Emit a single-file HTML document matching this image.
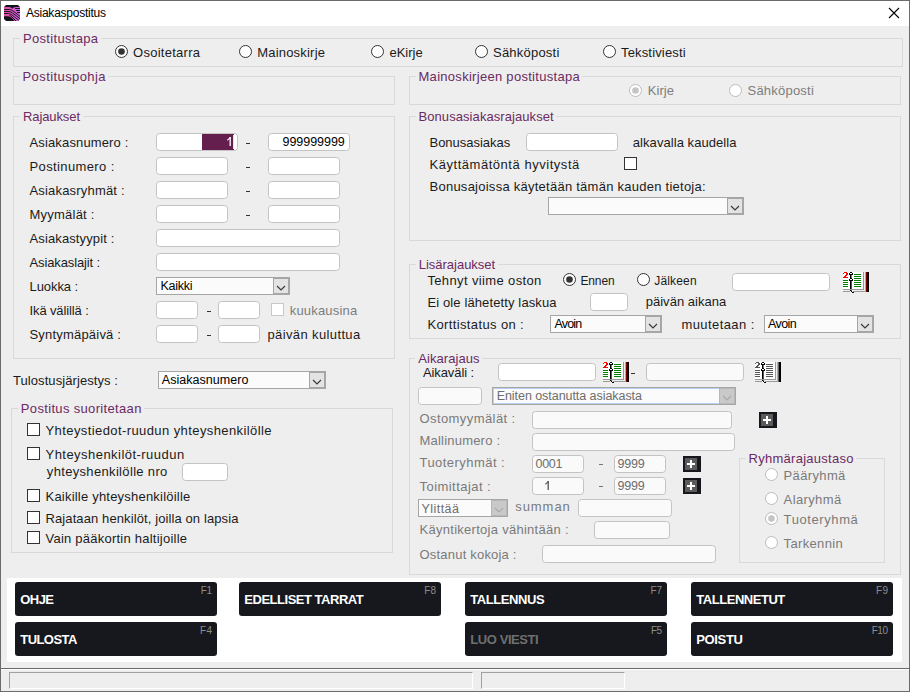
<!DOCTYPE html><html><head><meta charset="utf-8"><style>
html,body{margin:0;padding:0;}
body{width:910px;height:692px;position:relative;overflow:hidden;background:#eeeeee;font-family:"Liberation Sans",sans-serif;}
.a{position:absolute;}
.t{position:absolute;white-space:nowrap;line-height:1;}
svg.a{overflow:visible;}
</style></head><body>
<div class="a" style="left:1px;top:1px;width:908px;height:25px;background:#fff;"></div>
<svg class="a" style="left:4px;top:5px" width="16" height="16" viewBox="0 0 16 16">
<defs><linearGradient id="ig" x1="0" x2="1" y1="0" y2="0"><stop offset="0" stop-color="#e04f9e"/><stop offset="1" stop-color="#cf5ce6"/></linearGradient>
<clipPath id="ic"><path d="M2,0 H14 L16,2 V14 L14,16 H2 L0,14 V2 Z"/></clipPath></defs>
<path d="M2,0 H14 L16,2 V14 L14,16 H2 L0,14 V2 Z" fill="#111318"/>
<g clip-path="url(#ic)">
<path d="M0,2 L5,2 Q7.5,2.3 8,3.8 Q9,2.2 12,2 L16,2 L16,16 L10.5,16 Q7.5,11.3 3.5,11.3 L0,11.3 Z" fill="url(#ig)"/>
<g fill="none" stroke="#111318" stroke-width="0.95">
<path d="M0,4.5 H5.5 Q7.5,4.8 9,6 L16,11.3"/>
<path d="M0,6.5 H5 Q7,6.8 8.5,8 L16,13.6"/>
<path d="M0,8.5 H4.5 Q6.5,8.8 8,10 L15,15.5"/>
<path d="M5.5,10.3 Q7,10.8 8,12 L12,16"/>
<path d="M11,3.5 H16"/><path d="M12,5.5 H16"/><path d="M13,7.5 H16"/>
</g></g></svg>
<div class="t" style="left:26.00px;top:7.00px;font-size:12px;color:#000;letter-spacing:-0.243px;">Asiakaspostitus</div>
<svg class="a" style="left:888px;top:7px" width="12" height="12"><path d="M1,1 L11,11 M11,1 L1,11" stroke="#000" stroke-width="1.1"/></svg>
<div class="a" style="left:13px;top:38px;width:890px;height:29px;box-sizing:border-box;border:1px solid #d9d9d9;"></div>
<div class="a" style="left:20px;top:37px;width:81px;height:3px;background:#eeeeee;"></div>
<div class="t" style="left:23.00px;top:32.00px;font-size:13px;color:#6b2a63;letter-spacing:0.314px;">Postitustapa</div>
<svg class="a" style="left:115px;top:45px" width="14" height="14"><circle cx="6.5" cy="6.5" r="6" fill="#fff" stroke="#333" stroke-width="1"/><circle cx="6.5" cy="6.5" r="3.3" fill="#333"/></svg>
<div class="t" style="left:133.00px;top:46.00px;font-size:13px;color:#1b1b1b;letter-spacing:0.270px;">Osoitetarra</div>
<svg class="a" style="left:239px;top:45px" width="14" height="14"><circle cx="6.5" cy="6.5" r="6" fill="#fff" stroke="#333" stroke-width="1"/></svg>
<div class="t" style="left:257.20px;top:46.00px;font-size:13px;color:#1b1b1b;letter-spacing:0.205px;">Mainoskirje</div>
<svg class="a" style="left:371px;top:45px" width="14" height="14"><circle cx="6.5" cy="6.5" r="6" fill="#fff" stroke="#333" stroke-width="1"/></svg>
<div class="t" style="left:389.40px;top:46.00px;font-size:13px;color:#1b1b1b;letter-spacing:0.010px;">eKirje</div>
<svg class="a" style="left:475px;top:45px" width="14" height="14"><circle cx="6.5" cy="6.5" r="6" fill="#fff" stroke="#333" stroke-width="1"/></svg>
<div class="t" style="left:493.00px;top:46.00px;font-size:13px;color:#1b1b1b;letter-spacing:0.222px;">Sähköposti</div>
<svg class="a" style="left:603px;top:45px" width="14" height="14"><circle cx="6.5" cy="6.5" r="6" fill="#fff" stroke="#333" stroke-width="1"/></svg>
<div class="t" style="left:621.00px;top:46.00px;font-size:13px;color:#1b1b1b;letter-spacing:0.159px;">Tekstiviesti</div>
<div class="a" style="left:13px;top:76px;width:382px;height:29px;box-sizing:border-box;border:1px solid #d9d9d9;"></div>
<div class="a" style="left:20px;top:75px;width:88px;height:3px;background:#eeeeee;"></div>
<div class="t" style="left:22.50px;top:70.00px;font-size:13px;color:#6b2a63;letter-spacing:0.413px;">Postituspohja</div>
<div class="a" style="left:409px;top:76px;width:492px;height:29px;box-sizing:border-box;border:1px solid #d9d9d9;"></div>
<div class="a" style="left:416px;top:75px;width:166px;height:3px;background:#eeeeee;"></div>
<div class="t" style="left:418.50px;top:70.00px;font-size:13px;color:#6b2a63;letter-spacing:0.290px;">Mainoskirjeen postitustapa</div>
<svg class="a" style="left:629px;top:84px" width="14" height="14"><circle cx="6.5" cy="6.5" r="6" fill="#fff" stroke="#bcbcbc" stroke-width="1"/><circle cx="6.5" cy="6.5" r="3.3" fill="#c4c4c4"/></svg>
<div class="t" style="left:647.70px;top:84.00px;font-size:13px;color:#7d7d7d;letter-spacing:0.075px;">Kirje</div>
<svg class="a" style="left:729px;top:84px" width="14" height="14"><circle cx="6.5" cy="6.5" r="6" fill="#fff" stroke="#bcbcbc" stroke-width="1"/></svg>
<div class="t" style="left:747.50px;top:84.00px;font-size:13px;color:#7d7d7d;letter-spacing:0.222px;">Sähköposti</div>
<div class="a" style="left:13px;top:116px;width:382px;height:243px;box-sizing:border-box;border:1px solid #d9d9d9;"></div>
<div class="a" style="left:20px;top:115px;width:63px;height:3px;background:#eeeeee;"></div>
<div class="t" style="left:23.00px;top:110.00px;font-size:13px;color:#6b2a63;letter-spacing:-0.100px;">Rajaukset</div>
<div class="t" style="left:29.50px;top:136.00px;font-size:13px;color:#1b1b1b;letter-spacing:0.143px;">Asiakasnumero :</div>
<div class="t" style="left:29.50px;top:160.00px;font-size:13px;color:#1b1b1b;letter-spacing:0.383px;">Postinumero :</div>
<div class="t" style="left:29.50px;top:184.00px;font-size:13px;color:#1b1b1b;letter-spacing:0.182px;">Asiakasryhmät :</div>
<div class="t" style="left:29.50px;top:208.00px;font-size:13px;color:#1b1b1b;letter-spacing:0.228px;">Myymälät :</div>
<div class="t" style="left:29.50px;top:232.00px;font-size:13px;color:#1b1b1b;letter-spacing:0.121px;">Asiakastyypit :</div>
<div class="t" style="left:29.50px;top:256.00px;font-size:13px;color:#1b1b1b;letter-spacing:-0.119px;">Asiakaslajit :</div>
<div class="t" style="left:29.50px;top:280.00px;font-size:13px;color:#1b1b1b;letter-spacing:-0.064px;">Luokka :</div>
<div class="t" style="left:29.50px;top:304.00px;font-size:13px;color:#1b1b1b;letter-spacing:-0.117px;">Ikä välillä :</div>
<div class="t" style="left:29.50px;top:328.00px;font-size:13px;color:#1b1b1b;letter-spacing:0.196px;">Syntymäpäivä :</div>
<div class="a" style="left:156px;top:133px;width:82px;height:18px;box-sizing:border-box;border:1px solid #c3c3c3;border-radius:3.5px;background:#fff;"></div>
<div class="a" style="left:268px;top:133px;width:82px;height:18px;box-sizing:border-box;border:1px solid #c3c3c3;border-radius:3.5px;background:#fff;"></div>
<div class="a" style="left:202px;top:134px;width:32px;height:16px;background:#651f4e;"></div>
<svg class="a" style="left:227px;top:137px" width="6" height="10"><path d="M3.2,0 V9" stroke="#fff" stroke-width="1.3" fill="none"/><path d="M0.3,3.2 Q2.4,2 3.2,0.2" stroke="#fff" stroke-width="1.1" fill="none"/></svg>
<div class="a" style="left:233px;top:135px;width:1px;height:14px;background:#c0ffc0;"></div>
<div class="t" style="left:282.50px;top:136.00px;font-size:12.5px;color:#000;letter-spacing:-0.031px;">999999999</div>
<div class="a" style="left:246px;top:143px;width:4px;height:1px;background:#333;"></div>
<div class="a" style="left:156px;top:157px;width:72px;height:18px;box-sizing:border-box;border:1px solid #c3c3c3;border-radius:3.5px;background:#fff;"></div>
<div class="a" style="left:268px;top:157px;width:72px;height:18px;box-sizing:border-box;border:1px solid #c3c3c3;border-radius:3.5px;background:#fff;"></div>
<div class="a" style="left:246px;top:167px;width:4px;height:1px;background:#333;"></div>
<div class="a" style="left:156px;top:181px;width:72px;height:18px;box-sizing:border-box;border:1px solid #c3c3c3;border-radius:3.5px;background:#fff;"></div>
<div class="a" style="left:268px;top:181px;width:72px;height:18px;box-sizing:border-box;border:1px solid #c3c3c3;border-radius:3.5px;background:#fff;"></div>
<div class="a" style="left:246px;top:191px;width:4px;height:1px;background:#333;"></div>
<div class="a" style="left:156px;top:205px;width:72px;height:18px;box-sizing:border-box;border:1px solid #c3c3c3;border-radius:3.5px;background:#fff;"></div>
<div class="a" style="left:268px;top:205px;width:72px;height:18px;box-sizing:border-box;border:1px solid #c3c3c3;border-radius:3.5px;background:#fff;"></div>
<div class="a" style="left:246px;top:215px;width:4px;height:1px;background:#333;"></div>
<div class="a" style="left:156px;top:229px;width:184px;height:18px;box-sizing:border-box;border:1px solid #c3c3c3;border-radius:3.5px;background:#fff;"></div>
<div class="a" style="left:156px;top:253px;width:184px;height:18px;box-sizing:border-box;border:1px solid #c3c3c3;border-radius:3.5px;background:#fff;"></div>
<div class="a" style="left:156px;top:277px;width:134px;height:18px;box-sizing:border-box;border:1px solid #a6a6a6;background:#fbfbfb;"></div>
<div class="a" style="left:273px;top:278px;width:16px;height:16px;box-sizing:border-box;border:1px solid #a6a6a6;background:#e3e3e3;"></div>
<svg class="a" style="left:273px;top:277px" width="17" height="18"><polyline points="4,9 8,13 12,9" fill="none" stroke="#3a3a3a" stroke-width="1.15"/></svg>
<div class="t" style="left:160.50px;top:280.00px;font-size:12.5px;color:#000;letter-spacing:-0.270px;">Kaikki</div>
<div class="a" style="left:156px;top:301px;width:42px;height:18px;box-sizing:border-box;border:1px solid #c3c3c3;border-radius:3.5px;background:#fff;"></div>
<div class="a" style="left:218px;top:301px;width:42px;height:18px;box-sizing:border-box;border:1px solid #c3c3c3;border-radius:3.5px;background:#fff;"></div>
<div class="a" style="left:207px;top:311px;width:4px;height:1px;background:#333;"></div>
<div class="a" style="left:271px;top:303px;width:13px;height:13px;box-sizing:border-box;border:1px solid #c8c8c8;background:#fff;"></div>
<div class="t" style="left:289.70px;top:304.00px;font-size:13px;color:#7d7d7d;letter-spacing:0.189px;">kuukausina</div>
<div class="a" style="left:156px;top:325px;width:42px;height:18px;box-sizing:border-box;border:1px solid #c3c3c3;border-radius:3.5px;background:#fff;"></div>
<div class="a" style="left:218px;top:325px;width:42px;height:18px;box-sizing:border-box;border:1px solid #c3c3c3;border-radius:3.5px;background:#fff;"></div>
<div class="a" style="left:207px;top:335px;width:4px;height:1px;background:#333;"></div>
<div class="t" style="left:267.50px;top:328.00px;font-size:13px;color:#1b1b1b;letter-spacing:0.375px;">päivän kuluttua</div>
<div class="t" style="left:13.00px;top:374.00px;font-size:13px;color:#1b1b1b;letter-spacing:0.075px;">Tulostusjärjestys :</div>
<div class="a" style="left:158px;top:371px;width:168px;height:18px;box-sizing:border-box;border:1px solid #a6a6a6;background:#fbfbfb;"></div>
<div class="a" style="left:309px;top:372px;width:16px;height:16px;box-sizing:border-box;border:1px solid #a6a6a6;background:#e3e3e3;"></div>
<svg class="a" style="left:309px;top:371px" width="17" height="18"><polyline points="4,9 8,13 12,9" fill="none" stroke="#3a3a3a" stroke-width="1.15"/></svg>
<div class="t" style="left:161.80px;top:374.00px;font-size:12.5px;color:#000;letter-spacing:0.037px;">Asiakasnumero</div>
<div class="a" style="left:11px;top:408px;width:382px;height:145px;box-sizing:border-box;border:1px solid #d9d9d9;"></div>
<div class="a" style="left:18px;top:407px;width:126px;height:3px;background:#eeeeee;"></div>
<div class="t" style="left:20.80px;top:402.00px;font-size:13px;color:#6b2a63;letter-spacing:0.339px;">Postitus suoritetaan</div>
<div class="a" style="left:27px;top:423px;width:13px;height:13px;box-sizing:border-box;border:1px solid #333;background:#fff;"></div>
<div class="t" style="left:45.50px;top:424.00px;font-size:13px;color:#1b1b1b;letter-spacing:0.410px;">Yhteystiedot-ruudun yhteyshenkilölle</div>
<div class="a" style="left:27px;top:447px;width:13px;height:13px;box-sizing:border-box;border:1px solid #333;background:#fff;"></div>
<div class="t" style="left:45.50px;top:448.00px;font-size:13px;color:#1b1b1b;letter-spacing:0.463px;">Yhteyshenkilöt-ruudun</div>
<div class="a" style="left:27px;top:489px;width:13px;height:13px;box-sizing:border-box;border:1px solid #333;background:#fff;"></div>
<div class="t" style="left:45.50px;top:490.00px;font-size:13px;color:#1b1b1b;letter-spacing:0.210px;">Kaikille yhteyshenkilöille</div>
<div class="a" style="left:27px;top:511px;width:13px;height:13px;box-sizing:border-box;border:1px solid #333;background:#fff;"></div>
<div class="t" style="left:45.50px;top:512.00px;font-size:13px;color:#1b1b1b;letter-spacing:0.104px;">Rajataan henkilöt, joilla on lapsia</div>
<div class="a" style="left:27px;top:531px;width:13px;height:13px;box-sizing:border-box;border:1px solid #333;background:#fff;"></div>
<div class="t" style="left:45.50px;top:532.00px;font-size:13px;color:#1b1b1b;letter-spacing:0.236px;">Vain pääkortin haltijoille</div>
<div class="t" style="left:46.80px;top:465.00px;font-size:13px;color:#1b1b1b;letter-spacing:0.334px;">yhteyshenkilölle nro</div>
<div class="a" style="left:182px;top:463px;width:46px;height:18px;box-sizing:border-box;border:1px solid #c3c3c3;border-radius:3.5px;background:#fff;"></div>
<div class="a" style="left:409px;top:116px;width:492px;height:125px;box-sizing:border-box;border:1px solid #d9d9d9;"></div>
<div class="a" style="left:416px;top:115px;width:140px;height:3px;background:#eeeeee;"></div>
<div class="t" style="left:418.50px;top:110.00px;font-size:13px;color:#6b2a63;letter-spacing:0.075px;">Bonusasiakasrajaukset</div>
<div class="t" style="left:429.50px;top:136.00px;font-size:13px;color:#1b1b1b;letter-spacing:-0.023px;">Bonusasiakas</div>
<div class="a" style="left:526px;top:133px;width:92px;height:18px;box-sizing:border-box;border:1px solid #c3c3c3;border-radius:3.5px;background:#fff;"></div>
<div class="t" style="left:632.80px;top:136.00px;font-size:13px;color:#1b1b1b;letter-spacing:0.062px;">alkavalla kaudella</div>
<div class="t" style="left:429.50px;top:158.00px;font-size:13px;color:#1b1b1b;letter-spacing:0.534px;">Käyttämätöntä hyvitystä</div>
<div class="a" style="left:624px;top:157px;width:13px;height:13px;box-sizing:border-box;border:1px solid #333;background:#fff;"></div>
<div class="t" style="left:429.50px;top:180.00px;font-size:13px;color:#1b1b1b;letter-spacing:0.253px;">Bonusajoissa käytetään tämän kauden tietoja:</div>
<div class="a" style="left:548px;top:197px;width:196px;height:18px;box-sizing:border-box;border:1px solid #a6a6a6;background:#fbfbfb;"></div>
<div class="a" style="left:727px;top:198px;width:16px;height:16px;box-sizing:border-box;border:1px solid #a6a6a6;background:#e3e3e3;"></div>
<svg class="a" style="left:727px;top:197px" width="17" height="18"><polyline points="4,9 8,13 12,9" fill="none" stroke="#3a3a3a" stroke-width="1.15"/></svg>
<div class="a" style="left:409px;top:264px;width:492px;height:75px;box-sizing:border-box;border:1px solid #d9d9d9;"></div>
<div class="a" style="left:416px;top:263px;width:82px;height:3px;background:#eeeeee;"></div>
<div class="t" style="left:418.70px;top:258.00px;font-size:13px;color:#6b2a63;letter-spacing:-0.008px;">Lisärajaukset</div>
<div class="t" style="left:427.40px;top:274.00px;font-size:13px;color:#1b1b1b;letter-spacing:0.368px;">Tehnyt viime oston</div>
<svg class="a" style="left:563px;top:273px" width="14" height="14"><circle cx="6.5" cy="6.5" r="6" fill="#fff" stroke="#333" stroke-width="1"/><circle cx="6.5" cy="6.5" r="3.3" fill="#333"/></svg>
<div class="t" style="left:580.40px;top:275.00px;font-size:12px;color:#1b1b1b;letter-spacing:-0.100px;">Ennen</div>
<svg class="a" style="left:637px;top:273px" width="14" height="14"><circle cx="6.5" cy="6.5" r="6" fill="#fff" stroke="#333" stroke-width="1"/></svg>
<div class="t" style="left:654.30px;top:275.00px;font-size:12px;color:#1b1b1b;letter-spacing:0.158px;">Jälkeen</div>
<div class="a" style="left:732px;top:273px;width:98px;height:18px;box-sizing:border-box;border:1px solid #c3c3c3;border-radius:3.5px;background:#fff;"></div>
<svg class="a" style="left:843px;top:272px" width="28" height="21" shape-rendering="crispEdges"><rect x="0" y="0" width="21" height="18" fill="#fff"/><rect x="1" y="0" width="3" height="1" fill="#ff0000"/><rect x="0" y="1" width="1" height="1" fill="#ff0000"/><rect x="3" y="1" width="2" height="2" fill="#ff0000"/><rect x="2" y="3" width="2" height="1" fill="#ff0000"/><rect x="1" y="4" width="2" height="1" fill="#ff0000"/><rect x="0" y="5" width="5" height="1" fill="#ff0000"/><rect x="7" y="0" width="2" height="1" fill="#000"/><rect x="6" y="1" width="1" height="1" fill="#000"/><rect x="9" y="1" width="1" height="1" fill="#000"/><rect x="6" y="2" width="4" height="1" fill="#000"/><rect x="7" y="3" width="1" height="3" fill="#000"/><rect x="8" y="3" width="1" height="3" fill="#777"/><rect x="7" y="6" width="2" height="1" fill="#000"/><rect x="6" y="7" width="1" height="1" fill="#000"/><rect x="9" y="7" width="1" height="1" fill="#000"/><rect x="6" y="8" width="4" height="1" fill="#000"/><rect x="7" y="9" width="1" height="10" fill="#000"/><rect x="8" y="9" width="1" height="10" fill="#555"/><rect x="8" y="19" width="1" height="1" fill="#000"/><rect x="9" y="20" width="2" height="1" fill="#000"/><rect x="0" y="8" width="5" height="1" fill="#008000"/><rect x="0" y="10" width="5" height="1" fill="#008000"/><rect x="0" y="12" width="5" height="1" fill="#008000"/><rect x="0" y="14" width="5" height="1" fill="#008000"/><rect x="11" y="2" width="7" height="1" fill="#008000"/><rect x="11" y="4" width="7" height="1" fill="#008000"/><rect x="11" y="6" width="7" height="1" fill="#008000"/><rect x="11" y="8" width="7" height="1" fill="#008000"/><rect x="11" y="10" width="7" height="1" fill="#008000"/><rect x="11" y="12" width="7" height="1" fill="#008000"/><rect x="11" y="14" width="7" height="1" fill="#008000"/><rect x="0" y="17" width="21" height="1" fill="#999"/><rect x="0" y="19" width="7" height="1" fill="#999"/><rect x="10" y="19" width="12" height="1" fill="#999"/><rect x="20" y="0" width="1" height="18" fill="#999"/><rect x="22" y="0" width="1" height="20" fill="#aaa"/><rect x="23" y="0" width="1" height="20" fill="#7a0000"/><rect x="24" y="0" width="2" height="20" fill="#000"/></svg>
<div class="t" style="left:427.40px;top:296.00px;font-size:13px;color:#1b1b1b;letter-spacing:0.123px;">Ei ole lähetetty laskua</div>
<div class="a" style="left:590px;top:293px;width:38px;height:18px;box-sizing:border-box;border:1px solid #c3c3c3;border-radius:3.5px;background:#fff;"></div>
<div class="t" style="left:645.70px;top:295.00px;font-size:13px;color:#1b1b1b;letter-spacing:0.029px;">päivän aikana</div>
<div class="t" style="left:427.40px;top:318.00px;font-size:13px;color:#1b1b1b;letter-spacing:0.375px;">Korttistatus on :</div>
<div class="a" style="left:550px;top:315px;width:112px;height:18px;box-sizing:border-box;border:1px solid #a6a6a6;background:#fbfbfb;"></div>
<div class="a" style="left:645px;top:316px;width:16px;height:16px;box-sizing:border-box;border:1px solid #a6a6a6;background:#e3e3e3;"></div>
<svg class="a" style="left:645px;top:315px" width="17" height="18"><polyline points="4,9 8,13 12,9" fill="none" stroke="#3a3a3a" stroke-width="1.15"/></svg>
<div class="t" style="left:554.50px;top:318.00px;font-size:12.5px;color:#000;letter-spacing:-0.838px;">Avoin</div>
<div class="t" style="left:681.40px;top:318.00px;font-size:13px;color:#1b1b1b;letter-spacing:0.425px;">muutetaan :</div>
<div class="a" style="left:764px;top:315px;width:110px;height:18px;box-sizing:border-box;border:1px solid #a6a6a6;background:#fbfbfb;"></div>
<div class="a" style="left:857px;top:316px;width:16px;height:16px;box-sizing:border-box;border:1px solid #a6a6a6;background:#e3e3e3;"></div>
<svg class="a" style="left:857px;top:315px" width="17" height="18"><polyline points="4,9 8,13 12,9" fill="none" stroke="#3a3a3a" stroke-width="1.15"/></svg>
<div class="t" style="left:768.00px;top:318.00px;font-size:12.5px;color:#000;letter-spacing:-0.612px;">Avoin</div>
<div class="a" style="left:409px;top:358px;width:492px;height:217px;box-sizing:border-box;border:1px solid #d9d9d9;"></div>
<div class="a" style="left:415px;top:357px;width:67px;height:3px;background:#eeeeee;"></div>
<div class="t" style="left:418.20px;top:352.00px;font-size:13px;color:#6b2a63;letter-spacing:0.078px;">Aikarajaus</div>
<div class="t" style="left:422.90px;top:366.00px;font-size:13px;color:#1b1b1b;letter-spacing:-0.089px;">Aikaväli :</div>
<div class="a" style="left:498px;top:363px;width:98px;height:18px;box-sizing:border-box;border:1px solid #c3c3c3;border-radius:3.5px;background:#fff;"></div>
<svg class="a" style="left:603px;top:362px" width="28" height="21" shape-rendering="crispEdges"><rect x="0" y="0" width="21" height="18" fill="#fff"/><rect x="1" y="0" width="3" height="1" fill="#ff0000"/><rect x="0" y="1" width="1" height="1" fill="#ff0000"/><rect x="3" y="1" width="2" height="2" fill="#ff0000"/><rect x="2" y="3" width="2" height="1" fill="#ff0000"/><rect x="1" y="4" width="2" height="1" fill="#ff0000"/><rect x="0" y="5" width="5" height="1" fill="#ff0000"/><rect x="7" y="0" width="2" height="1" fill="#000"/><rect x="6" y="1" width="1" height="1" fill="#000"/><rect x="9" y="1" width="1" height="1" fill="#000"/><rect x="6" y="2" width="4" height="1" fill="#000"/><rect x="7" y="3" width="1" height="3" fill="#000"/><rect x="8" y="3" width="1" height="3" fill="#777"/><rect x="7" y="6" width="2" height="1" fill="#000"/><rect x="6" y="7" width="1" height="1" fill="#000"/><rect x="9" y="7" width="1" height="1" fill="#000"/><rect x="6" y="8" width="4" height="1" fill="#000"/><rect x="7" y="9" width="1" height="10" fill="#000"/><rect x="8" y="9" width="1" height="10" fill="#555"/><rect x="8" y="19" width="1" height="1" fill="#000"/><rect x="9" y="20" width="2" height="1" fill="#000"/><rect x="0" y="8" width="5" height="1" fill="#008000"/><rect x="0" y="10" width="5" height="1" fill="#008000"/><rect x="0" y="12" width="5" height="1" fill="#008000"/><rect x="0" y="14" width="5" height="1" fill="#008000"/><rect x="11" y="2" width="7" height="1" fill="#008000"/><rect x="11" y="4" width="7" height="1" fill="#008000"/><rect x="11" y="6" width="7" height="1" fill="#008000"/><rect x="11" y="8" width="7" height="1" fill="#008000"/><rect x="11" y="10" width="7" height="1" fill="#008000"/><rect x="11" y="12" width="7" height="1" fill="#008000"/><rect x="11" y="14" width="7" height="1" fill="#008000"/><rect x="0" y="17" width="21" height="1" fill="#999"/><rect x="0" y="19" width="7" height="1" fill="#999"/><rect x="10" y="19" width="12" height="1" fill="#999"/><rect x="20" y="0" width="1" height="18" fill="#999"/><rect x="22" y="0" width="1" height="20" fill="#aaa"/><rect x="23" y="0" width="1" height="20" fill="#7a0000"/><rect x="24" y="0" width="2" height="20" fill="#000"/></svg>
<div class="a" style="left:631px;top:373px;width:4px;height:1px;background:#333;"></div>
<div class="a" style="left:646px;top:363px;width:98px;height:18px;box-sizing:border-box;border:1px solid #c3c3c3;border-radius:3.5px;background:#fafafa;"></div>
<svg class="a" style="left:755px;top:362px" width="28" height="21" shape-rendering="crispEdges"><rect x="0" y="0" width="21" height="18" fill="#fff"/><rect x="1" y="0" width="3" height="1" fill="#555"/><rect x="0" y="1" width="1" height="1" fill="#555"/><rect x="3" y="1" width="2" height="2" fill="#555"/><rect x="2" y="3" width="2" height="1" fill="#555"/><rect x="1" y="4" width="2" height="1" fill="#555"/><rect x="0" y="5" width="5" height="1" fill="#555"/><rect x="7" y="0" width="2" height="1" fill="#000"/><rect x="6" y="1" width="1" height="1" fill="#000"/><rect x="9" y="1" width="1" height="1" fill="#000"/><rect x="6" y="2" width="4" height="1" fill="#000"/><rect x="7" y="3" width="1" height="3" fill="#000"/><rect x="8" y="3" width="1" height="3" fill="#777"/><rect x="7" y="6" width="2" height="1" fill="#000"/><rect x="6" y="7" width="1" height="1" fill="#000"/><rect x="9" y="7" width="1" height="1" fill="#000"/><rect x="6" y="8" width="4" height="1" fill="#000"/><rect x="7" y="9" width="1" height="10" fill="#000"/><rect x="8" y="9" width="1" height="10" fill="#555"/><rect x="8" y="19" width="1" height="1" fill="#000"/><rect x="9" y="20" width="2" height="1" fill="#000"/><rect x="0" y="8" width="5" height="1" fill="#555"/><rect x="0" y="10" width="5" height="1" fill="#555"/><rect x="0" y="12" width="5" height="1" fill="#555"/><rect x="0" y="14" width="5" height="1" fill="#555"/><rect x="11" y="2" width="7" height="1" fill="#555"/><rect x="11" y="4" width="7" height="1" fill="#555"/><rect x="11" y="6" width="7" height="1" fill="#555"/><rect x="11" y="8" width="7" height="1" fill="#555"/><rect x="11" y="10" width="7" height="1" fill="#555"/><rect x="11" y="12" width="7" height="1" fill="#555"/><rect x="11" y="14" width="7" height="1" fill="#555"/><rect x="0" y="17" width="21" height="1" fill="#999"/><rect x="0" y="19" width="7" height="1" fill="#999"/><rect x="10" y="19" width="12" height="1" fill="#999"/><rect x="20" y="0" width="1" height="18" fill="#999"/><rect x="22" y="0" width="1" height="20" fill="#aaa"/><rect x="23" y="0" width="1" height="20" fill="#666"/><rect x="24" y="0" width="2" height="20" fill="#000"/></svg>
<div class="a" style="left:418px;top:387px;width:64px;height:18px;box-sizing:border-box;border:1px solid #c3c3c3;border-radius:3.5px;background:#fafafa;"></div>
<div class="a" style="left:492px;top:387px;width:244px;height:18px;box-sizing:border-box;border:1px solid #a6a6a6;background:#fbfbfb;"></div>
<div class="a" style="left:493px;top:388px;width:242px;height:16px;box-sizing:border-box;border:1px solid #b9d1f0;"></div>
<div class="a" style="left:719px;top:388px;width:16px;height:16px;box-sizing:border-box;border:1px solid #b8b8b8;background:#c9c9c9;"></div>
<svg class="a" style="left:719px;top:387px" width="17" height="18"><polyline points="4,9 8,13 12,9" fill="none" stroke="#a9a9a9" stroke-width="1.15"/></svg>
<div class="t" style="left:496.70px;top:390.00px;font-size:12.5px;color:#6d6d6d;letter-spacing:-0.054px;">Eniten ostanutta asiakasta</div>
<div class="t" style="left:419.50px;top:412.00px;font-size:13px;color:#7a7a7a;letter-spacing:0.415px;">Ostomyymälät :</div>
<div class="a" style="left:532px;top:411px;width:200px;height:18px;box-sizing:border-box;border:1px solid #c3c3c3;border-radius:3.5px;background:#fafafa;"></div>
<div class="a" style="left:759px;top:412px;width:18px;height:16px;background:#16181d;"></div>
<div class="a" style="left:761px;top:414px;width:12px;height:12px;background:#5b5b5b;"></div>
<div class="a" style="left:763px;top:419px;width:8px;height:2px;background:#fff;"></div>
<div class="a" style="left:766px;top:416px;width:2px;height:8px;background:#fff;"></div>
<div class="t" style="left:419.50px;top:434.00px;font-size:13px;color:#7a7a7a;letter-spacing:0.208px;">Mallinumero :</div>
<div class="a" style="left:532px;top:433px;width:203px;height:18px;box-sizing:border-box;border:1px solid #c3c3c3;border-radius:3.5px;background:#fafafa;"></div>
<div class="t" style="left:419.50px;top:456.00px;font-size:13px;color:#7a7a7a;letter-spacing:0.458px;">Tuoteryhmät :</div>
<div class="a" style="left:532px;top:455px;width:52px;height:18px;box-sizing:border-box;border:1px solid #c3c3c3;border-radius:3.5px;background:#fafafa;"></div>
<div class="t" style="left:535.50px;top:458.00px;font-size:12.5px;color:#6d6d6d;letter-spacing:-0.300px;">0001</div>
<div class="a" style="left:599px;top:464px;width:4px;height:1px;background:#777;"></div>
<div class="a" style="left:614px;top:455px;width:52px;height:18px;box-sizing:border-box;border:1px solid #c3c3c3;border-radius:3.5px;background:#fafafa;"></div>
<div class="t" style="left:617.60px;top:458.00px;font-size:12.5px;color:#6d6d6d;letter-spacing:-0.233px;">9999</div>
<div class="a" style="left:683px;top:456px;width:18px;height:16px;background:#16181d;"></div>
<div class="a" style="left:685px;top:458px;width:12px;height:12px;background:#5b5b5b;"></div>
<div class="a" style="left:687px;top:463px;width:8px;height:2px;background:#fff;"></div>
<div class="a" style="left:690px;top:460px;width:2px;height:8px;background:#fff;"></div>
<div class="t" style="left:419.50px;top:480.00px;font-size:13px;color:#7a7a7a;letter-spacing:0.454px;">Toimittajat :</div>
<div class="a" style="left:532px;top:477px;width:52px;height:18px;box-sizing:border-box;border:1px solid #c3c3c3;border-radius:3.5px;background:#fafafa;"></div>
<svg class="a" style="left:545px;top:481px" width="6" height="10"><path d="M3.2,0 V9" stroke="#555" stroke-width="1.3" fill="none"/><path d="M0.3,3.2 Q2.4,2 3.2,0.2" stroke="#555" stroke-width="1.1" fill="none"/></svg>
<div class="a" style="left:599px;top:486px;width:4px;height:1px;background:#777;"></div>
<div class="a" style="left:614px;top:477px;width:52px;height:18px;box-sizing:border-box;border:1px solid #c3c3c3;border-radius:3.5px;background:#fafafa;"></div>
<div class="t" style="left:617.60px;top:480.00px;font-size:12.5px;color:#6d6d6d;letter-spacing:-0.233px;">9999</div>
<div class="a" style="left:683px;top:478px;width:18px;height:16px;background:#16181d;"></div>
<div class="a" style="left:685px;top:480px;width:12px;height:12px;background:#5b5b5b;"></div>
<div class="a" style="left:687px;top:485px;width:8px;height:2px;background:#fff;"></div>
<div class="a" style="left:690px;top:482px;width:2px;height:8px;background:#fff;"></div>
<div class="a" style="left:418px;top:499px;width:90px;height:18px;box-sizing:border-box;border:1px solid #a6a6a6;background:#fbfbfb;"></div>
<div class="a" style="left:491px;top:500px;width:16px;height:16px;box-sizing:border-box;border:1px solid #b8b8b8;background:#c9c9c9;"></div>
<svg class="a" style="left:491px;top:499px" width="17" height="18"><polyline points="4,9 8,13 12,9" fill="none" stroke="#a9a9a9" stroke-width="1.15"/></svg>
<div class="t" style="left:421.50px;top:503.00px;font-size:12.5px;color:#6d6d6d;letter-spacing:0.450px;">Ylittää</div>
<div class="t" style="left:515.20px;top:500.00px;font-size:13px;color:#7a7a7a;letter-spacing:0.950px;">summan</div>
<div class="a" style="left:578px;top:499px;width:94px;height:18px;box-sizing:border-box;border:1px solid #c3c3c3;border-radius:3.5px;background:#fafafa;"></div>
<div class="t" style="left:419.50px;top:523.00px;font-size:13px;color:#7a7a7a;letter-spacing:0.277px;">Käyntikertoja vähintään :</div>
<div class="a" style="left:594px;top:521px;width:76px;height:18px;box-sizing:border-box;border:1px solid #c3c3c3;border-radius:3.5px;background:#fafafa;"></div>
<div class="t" style="left:419.50px;top:548.00px;font-size:13px;color:#7a7a7a;letter-spacing:0.203px;">Ostanut kokoja :</div>
<div class="a" style="left:542px;top:545px;width:174px;height:18px;box-sizing:border-box;border:1px solid #c3c3c3;border-radius:3.5px;background:#fafafa;"></div>
<div class="a" style="left:739px;top:458px;width:146px;height:105px;box-sizing:border-box;border:1px solid #d9d9d9;"></div>
<div class="a" style="left:746px;top:457px;width:110px;height:3px;background:#eeeeee;"></div>
<div class="t" style="left:748.60px;top:452.00px;font-size:13px;color:#6b2a63;letter-spacing:0.261px;">Ryhmärajaustaso</div>
<svg class="a" style="left:765px;top:468px" width="14" height="14"><circle cx="6.5" cy="6.5" r="6" fill="#fff" stroke="#bcbcbc" stroke-width="1"/></svg>
<div class="t" style="left:783.60px;top:469.00px;font-size:13px;color:#7a7a7a;letter-spacing:0.350px;">Pääryhmä</div>
<svg class="a" style="left:765px;top:492px" width="14" height="14"><circle cx="6.5" cy="6.5" r="6" fill="#fff" stroke="#bcbcbc" stroke-width="1"/></svg>
<div class="t" style="left:783.60px;top:493.00px;font-size:13px;color:#7a7a7a;letter-spacing:0.379px;">Alaryhmä</div>
<svg class="a" style="left:765px;top:512px" width="14" height="14"><circle cx="6.5" cy="6.5" r="6" fill="#fff" stroke="#bcbcbc" stroke-width="1"/><circle cx="6.5" cy="6.5" r="3.3" fill="#c4c4c4"/></svg>
<div class="t" style="left:783.60px;top:513.00px;font-size:13px;color:#7a7a7a;letter-spacing:0.589px;">Tuoteryhmä</div>
<svg class="a" style="left:765px;top:536px" width="14" height="14"><circle cx="6.5" cy="6.5" r="6" fill="#fff" stroke="#bcbcbc" stroke-width="1"/></svg>
<div class="t" style="left:783.60px;top:537.00px;font-size:13px;color:#7a7a7a;letter-spacing:0.344px;">Tarkennin</div>
<div class="a" style="left:7px;top:578px;width:895px;height:84px;background:#fff;"></div>
<div class="a" style="left:15px;top:582px;width:202px;height:34px;background:#16181d;border-radius:3px;"></div>
<div class="t" style="left:20.30px;top:593.00px;font-size:13px;color:#fff;letter-spacing:-0.567px;font-weight:bold;">OHJE</div>
<div class="t" style="left:200.85px;top:586.00px;font-size:10px;color:#8c8c8c;letter-spacing:-0.500px;">F1</div>
<div class="a" style="left:15px;top:622px;width:202px;height:34px;background:#16181d;border-radius:3px;"></div>
<div class="t" style="left:20.30px;top:633.00px;font-size:13px;color:#fff;letter-spacing:-0.567px;font-weight:bold;">TULOSTA</div>
<div class="t" style="left:200.10px;top:626.00px;font-size:10px;color:#8c8c8c;letter-spacing:0.250px;">F4</div>
<div class="a" style="left:239px;top:582px;width:202px;height:34px;background:#16181d;border-radius:3px;"></div>
<div class="t" style="left:244.30px;top:593.00px;font-size:13px;color:#fff;letter-spacing:-0.480px;font-weight:bold;">EDELLISET TARRAT</div>
<div class="t" style="left:424.30px;top:586.00px;font-size:10px;color:#8c8c8c;letter-spacing:0.050px;">F8</div>
<div class="a" style="left:465px;top:582px;width:202px;height:34px;background:#16181d;border-radius:3px;"></div>
<div class="t" style="left:470.30px;top:593.00px;font-size:13px;color:#fff;letter-spacing:-0.419px;font-weight:bold;">TALLENNUS</div>
<div class="t" style="left:650.40px;top:586.00px;font-size:10px;color:#8c8c8c;letter-spacing:-0.050px;">F7</div>
<div class="a" style="left:465px;top:622px;width:202px;height:34px;background:#16181d;border-radius:3px;"></div>
<div class="t" style="left:470.30px;top:633.00px;font-size:13px;color:#6f6f6f;letter-spacing:-0.428px;font-weight:bold;">LUO VIESTI</div>
<div class="t" style="left:651.10px;top:626.00px;font-size:10px;color:#8c8c8c;letter-spacing:-0.750px;">F5</div>
<div class="a" style="left:691px;top:582px;width:202px;height:34px;background:#16181d;border-radius:3px;"></div>
<div class="t" style="left:696.30px;top:593.00px;font-size:13px;color:#fff;letter-spacing:-0.465px;font-weight:bold;">TALLENNETUT</div>
<div class="t" style="left:876.10px;top:586.00px;font-size:10px;color:#8c8c8c;letter-spacing:0.250px;">F9</div>
<div class="a" style="left:691px;top:622px;width:202px;height:34px;background:#16181d;border-radius:3px;"></div>
<div class="t" style="left:696.30px;top:633.00px;font-size:13px;color:#fff;letter-spacing:-0.360px;font-weight:bold;">POISTU</div>
<div class="t" style="left:871.70px;top:626.00px;font-size:10px;color:#8c8c8c;letter-spacing:-0.475px;">F10</div>
<div class="a" style="left:1px;top:668px;width:908px;height:1px;background:#6b6b6b;"></div>
<div class="a" style="left:1px;top:669px;width:908px;height:1px;background:#fff;"></div>
<div class="a" style="left:9px;top:672px;width:464px;height:17px;box-sizing:border-box;border-top:1px solid #a0a0a0;border-left:1px solid #a0a0a0;border-right:1px solid #fff;border-bottom:1px solid #fff;"></div>
<div class="a" style="left:481px;top:672px;width:144px;height:17px;box-sizing:border-box;border-top:1px solid #a0a0a0;border-left:1px solid #a0a0a0;border-right:1px solid #fff;border-bottom:1px solid #fff;"></div>
<div class="a" style="left:0px;top:0px;width:910px;height:692px;box-sizing:border-box;border:1px solid #6b6b6b;"></div>
</body></html>
